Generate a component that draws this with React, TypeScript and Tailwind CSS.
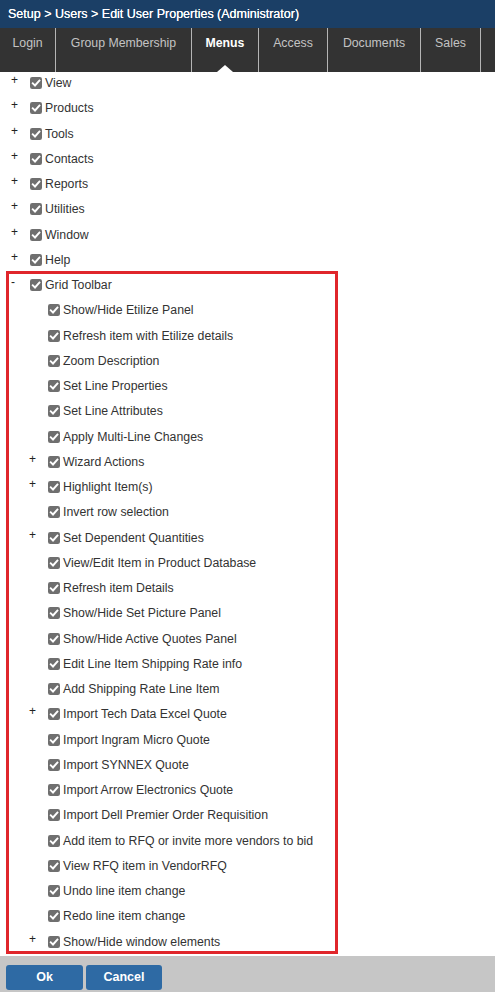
import React from 'react';

type Item = { label: string; expandable?: boolean };

const topItems = ['View', 'Products', 'Tools', 'Contacts', 'Reports', 'Utilities', 'Window', 'Help'];

const gridItems: Item[] = [
  { label: 'Show/Hide Etilize Panel' },
  { label: 'Refresh item with Etilize details' },
  { label: 'Zoom Description' },
  { label: 'Set Line Properties' },
  { label: 'Set Line Attributes' },
  { label: 'Apply Multi-Line Changes' },
  { label: 'Wizard Actions', expandable: true },
  { label: 'Highlight Item(s)', expandable: true },
  { label: 'Invert row selection' },
  { label: 'Set Dependent Quantities', expandable: true },
  { label: 'View/Edit Item in Product Database' },
  { label: 'Refresh item Details' },
  { label: 'Show/Hide Set Picture Panel' },
  { label: 'Show/Hide Active Quotes Panel' },
  { label: 'Edit Line Item Shipping Rate info' },
  { label: 'Add Shipping Rate Line Item' },
  { label: 'Import Tech Data Excel Quote', expandable: true },
  { label: 'Import Ingram Micro Quote' },
  { label: 'Import SYNNEX Quote' },
  { label: 'Import Arrow Electronics Quote' },
  { label: 'Import Dell Premier Order Requisition' },
  { label: 'Add item to RFQ or invite more vendors to bid' },
  { label: 'View RFQ item in VendorRFQ' },
  { label: 'Undo line item change' },
  { label: 'Redo line item change' },
  { label: 'Show/Hide window elements', expandable: true },
];

const tabs = [
  { label: 'Login', w: 'w-[56px]' },
  { label: 'Group Membership', w: 'w-[136px]' },
  { label: 'Menus', w: 'w-[67px]', active: true },
  { label: 'Access', w: 'w-[69px]' },
  { label: 'Documents', w: 'w-[93px]' },
  { label: 'Sales', w: 'w-[60px]' },
  { label: '', w: 'w-[40px]' },
];

const Check = () => (
  <svg width="12" height="12" viewBox="0 0 12 12" className="shrink-0">
    <rect x="0" y="0" width="12" height="12" rx="2.2" fill="#6f6f6f" />
    <path d="M2.8 6.3 L5 8.5 L9.4 3.5" fill="none" stroke="#fff" strokeWidth="1.9" strokeLinecap="square" />
  </svg>
);

const Row = ({ label, toggle, indent }: { label: string; toggle?: string; indent?: boolean }) => (
  <div className={`flex items-start h-[25.25px] last:h-[20px] pt-[3px] ${indent ? 'pl-[29px]' : 'pl-[11px]'}`}>
    <span className="w-[19px] text-[12px] leading-[10px] text-[#222]">{toggle ?? ''}</span>
    <div className="flex items-center gap-[3px] h-[16px]">
      <Check />
      <span className="text-[12.3px] leading-[16px] text-[#333] whitespace-nowrap">{label}</span>
    </div>
  </div>
);

export default function App() {
  return (
    <div className="w-[495px] h-[992px] flex flex-col bg-white overflow-hidden font-['Liberation_Sans',Arial,sans-serif]">
      <div className="h-[28px] bg-[#1b3f66] text-white text-[12.5px] leading-[28px] pl-[8px] whitespace-nowrap [text-shadow:0_0_0.4px_#fff]">
        Setup &gt; Users &gt; Edit User Properties (Administrator)
      </div>
      <div className="h-[44px] bg-[#333333] flex">
        {tabs.map((t, i) => (
          <div
            key={i}
            className={`relative shrink-0 ${t.w} ${i < tabs.length - 1 ? 'border-r border-[#b5b5b5]' : ''} text-center pt-[7px] text-[12.3px] leading-[16px] ${t.active ? 'text-white font-bold' : 'text-[#c3c3c3]'}`}
          >
            {t.label}
            {t.active && (
              <div className="absolute bottom-0 left-1/2 -translate-x-1/2 w-0 h-0 border-l-[8px] border-r-[8px] border-b-[7px] border-l-transparent border-r-transparent border-b-white" />
            )}
          </div>
        ))}
      </div>
      <div className="flex-1 overflow-hidden">
        {topItems.map((l) => (
          <Row key={l} label={l} toggle="+" />
        ))}
        <div className="-mt-[3px] ml-[6px] w-[332px] border-[3px] border-[#e0262b]">
          <div className="-ml-[9px]">
            <Row label="Grid Toolbar" toggle="-" />
            {gridItems.map((it) => (
              <Row key={it.label} label={it.label} toggle={it.expandable ? '+' : undefined} indent />
            ))}
          </div>
        </div>
      </div>
      <div className="h-[36px] bg-[#c6c6c6] flex items-start gap-[3px] pl-[6px] pt-[9px]">
        <button className="w-[77px] h-[25px] rounded-[3px] bg-[#2e6aa4] text-white text-[12.5px] font-bold">Ok</button>
        <button className="w-[76px] h-[25px] rounded-[3px] bg-[#2e6aa4] text-white text-[12.5px] font-bold">Cancel</button>
      </div>
    </div>
  );
}
